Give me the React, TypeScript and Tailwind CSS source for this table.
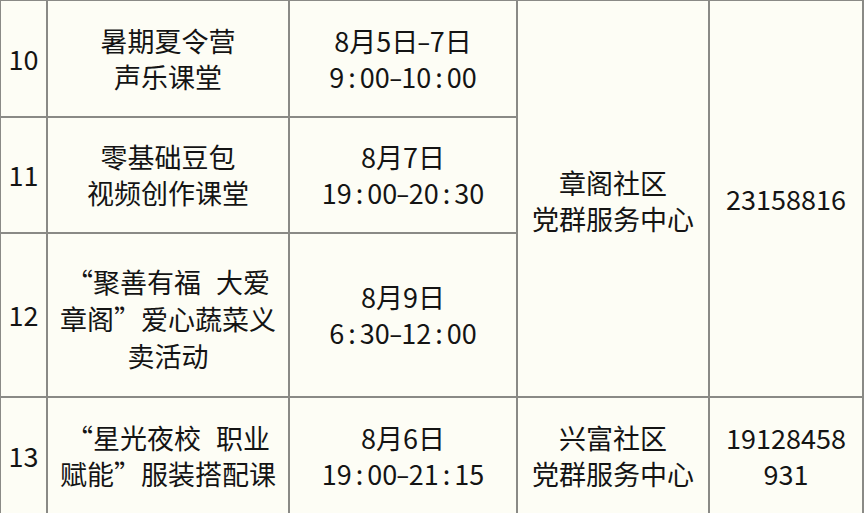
import React from "react";

const Colon = () => <span className="px-[4px]">:</span>;
const Dash = () => (
  <span className="inline-block px-[1px] scale-x-[1.5]">-</span>
);
const Gap = () => <span className="inline-block w-[15px]"> </span>;

const cell =
  "border-2 border-[#8a8a86] text-center align-middle p-0 leading-[36px]";

export default function App() {
  return (
    <div
      className="w-[864px] h-[513px] bg-[#fdfdf5] overflow-hidden text-[#141414] text-[27px]"
      style={{ fontFamily: '"Noto Sans CJK SC", "Noto Sans", sans-serif' }}
    >
      <table className="border-collapse table-fixed w-[863px] -mt-px -ml-px">
        <colgroup>
          <col className="w-[47px]" />
          <col className="w-[242px]" />
          <col className="w-[228px]" />
          <col className="w-[192px]" />
          <col className="w-[154px]" />
        </colgroup>
        <tbody>
          <tr className="h-[117px]">
            <td className={cell}>10</td>
            <td className={cell}>
              暑期夏令营
              <br />
              声乐课堂
            </td>
            <td className={cell}>
              8月5日<Dash />7日
              <br />9<Colon />00<Dash />10<Colon />00
            </td>
            <td className={cell} rowSpan={3}>
              <div className="pt-[4px]">
                章阁社区
                <br />
                党群服务中心
              </div>
            </td>
            <td className={cell} rowSpan={3}>
              23158816
            </td>
          </tr>
          <tr className="h-[116px]">
            <td className={cell}>11</td>
            <td className={cell}>
              零基础豆包
              <br />
              视频创作课堂
            </td>
            <td className={cell}>
              8月7日
              <br />
              19<Colon />00<Dash />20<Colon />30
            </td>
          </tr>
          <tr className="h-[164px]">
            <td className={cell}>12</td>
            <td className={cell}>
              <div className="pt-[6px] leading-[37px]">
                “聚善有福<Gap />大爱
                <br />
                章阁”爱心蔬菜义
                <br />
                卖活动
              </div>
            </td>
            <td className={cell}>
              8月9日
              <br />6<Colon />30<Dash />12<Colon />00
            </td>
          </tr>
          <tr className="h-[117px]">
            <td className={cell}>13</td>
            <td className={cell}>
              “星光夜校<Gap />职业
              <br />
              赋能”服装搭配课
            </td>
            <td className={cell}>
              8月6日
              <br />
              19<Colon />00<Dash />21<Colon />15
            </td>
            <td className={cell}>
              兴富社区
              <br />
              党群服务中心
            </td>
            <td className={cell}>
              19128458
              <br />
              931
            </td>
          </tr>
        </tbody>
      </table>
    </div>
  );
}
